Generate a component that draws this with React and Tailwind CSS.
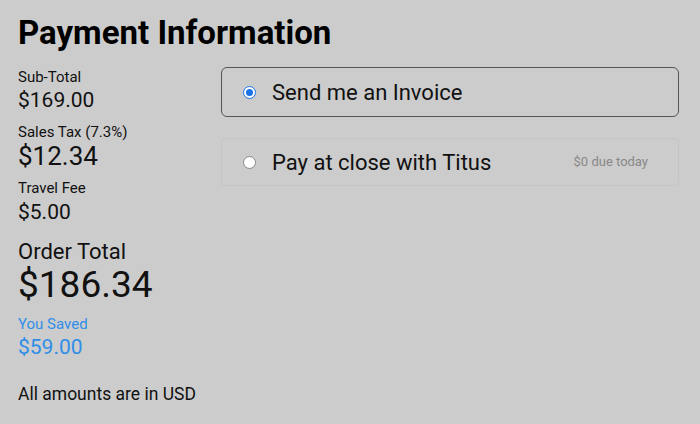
export default function App() {
  return (
    <div className="min-h-[424px] w-[700px] bg-[#cccccc] px-[18px] pt-[14px] text-[#111] font-['Roboto','Liberation_Sans',sans-serif]">
      <h1 className="text-[33px] leading-[38px] font-bold text-black">Payment Information</h1>
      <div className="mt-[15px] flex">
        <div className="w-[203px] shrink-0 pt-[1px]">
          <div className="text-[15px] leading-[18px]">Sub-Total</div>
          <div className="text-[21px] leading-[28px]">$169.00</div>
          <div className="mt-[9px] text-[15px] leading-[18px]">Sales Tax (7.3%)</div>
          <div className="text-[26px] leading-[30px]">$12.34</div>
          <div className="mt-[8px] text-[15px] leading-[18px]">Travel Fee</div>
          <div className="text-[21px] leading-[30px]">$5.00</div>
          <div className="mt-[12px] text-[22px] leading-[26px]">Order Total</div>
          <div className="text-[37px] leading-[40px]">$186.34</div>
          <div className="mt-[10px] text-[15px] leading-[18px] text-[#2f8ee8]">You Saved</div>
          <div className="text-[21px] leading-[28px] text-[#2f8ee8]">$59.00</div>
          <div className="mt-[23px] text-[17.5px] leading-[20px]">All amounts are in USD</div>
        </div>
        <div className="flex-1 flex flex-col gap-[21px] pr-[3px]">
          <label className="flex h-[50px] items-center rounded-[6px] border-[1.5px] border-[#555] pl-[21px] pr-[30px]">
            <span className="flex h-[13px] w-[13px] items-center justify-center rounded-full border border-[#1a73e8] bg-white">
              <span className="h-[7px] w-[7px] rounded-full bg-[#1a73e8]" />
            </span>
            <span className="ml-[16px] text-[22px] text-[#111]">Send me an Invoice</span>
          </label>
          <label className="flex h-[48px] items-center rounded-[4px] border border-[#c4c4c4] pl-[21px] pr-[30px]">
            <span className="h-[13px] w-[13px] rounded-full border border-[#888] bg-white" />
            <span className="ml-[16px] text-[22px] text-[#111]">Pay at close with Titus</span>
            <span className="ml-auto text-[13px] text-[#888]">$0 due today</span>
          </label>
        </div>
      </div>
    </div>
  );
}
